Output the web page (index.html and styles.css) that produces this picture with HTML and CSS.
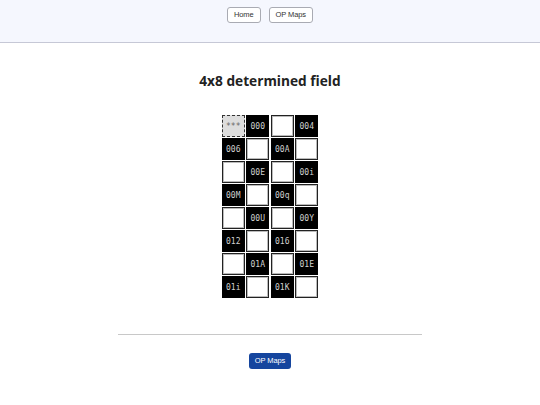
FILE: index.html
```html
<!DOCTYPE html>
<html>
<head>
<meta charset="utf-8">
<link rel="stylesheet" href="styles.css">
</head>
<body>
<header class="top">
  <nav class="nav">
    <a class="nav-btn">Home</a>
    <a class="nav-btn">OP Maps</a>
  </nav>
</header>
<main class="main">
  <h1 class="title">4x8 determined field</h1>
  <div class="field">
    <div class="cell sel">***</div><div class="cell on">000</div><div class="cell off"></div><div class="cell on">004</div>
    <div class="cell on">006</div><div class="cell off"></div><div class="cell on">00A</div><div class="cell off"></div>
    <div class="cell off"></div><div class="cell on">00E</div><div class="cell off"></div><div class="cell on">00i</div>
    <div class="cell on">00M</div><div class="cell off"></div><div class="cell on">00q</div><div class="cell off"></div>
    <div class="cell off"></div><div class="cell on">00U</div><div class="cell off"></div><div class="cell on">00Y</div>
    <div class="cell on">012</div><div class="cell off"></div><div class="cell on">016</div><div class="cell off"></div>
    <div class="cell off"></div><div class="cell on">01A</div><div class="cell off"></div><div class="cell on">01E</div>
    <div class="cell on">01i</div><div class="cell off"></div><div class="cell on">01K</div><div class="cell off"></div>
  </div>
  <hr class="rule">
  <a class="primary">OP Maps</a>
</main>
</body>
</html>
```
FILE: styles.css
```css
html, body { margin: 0; padding: 0; background: #fff; }
body { font-family: "Liberation Sans", Arial, sans-serif; color: #222; }
.top {
  height: 42px;
  background: #f5f7fe;
  border-bottom: 1px solid #c6c8d6;
  box-sizing: content-box;
}
.nav {
  display: flex;
  justify-content: center;
  gap: 8px;
  padding-top: 7px;
}
.nav-btn {
  display: block;
  height: 16px;
  line-height: 14px;
  box-sizing: border-box;
  padding: 0 6px;
  font-size: 7.5px;
  letter-spacing: -0.1px;
  color: #333;
  background: #fff;
  border: 1px solid #a9abb3;
  border-radius: 3px;
}
.main {
  display: flex;
  flex-direction: column;
  align-items: center;
}
.title {
  margin: 28px 0 0;
  font-family: "Open Sans", sans-serif;
  font-weight: 700;
  font-size: 13.7px;
  line-height: 20px;
  color: #222;
}
.field {
  margin-top: 24px;
  display: grid;
  grid-template-columns: repeat(4, 23px);
  grid-auto-rows: 22px;
  column-gap: 1.5px;
  row-gap: 1px;
}
.cell {
  box-sizing: border-box;
  display: flex;
  align-items: center;
  justify-content: center;
  font-family: "DejaVu Sans Mono", monospace;
  font-size: 8px;
}
.on { background: #000; color: #d0d0d0; }
.off { background: #fff; border: 1px solid #222; box-shadow: inset 0 0 0 1px #bbb; }
.sel { background: #ddd; color: #666; border: 1px dashed #333; }
.rule {
  width: 304px;
  margin: 36px 0 0;
  border: 0;
  border-top: 1px solid #c8c8c8;
}
.primary {
  margin-top: 18px;
  display: block;
  height: 16px;
  line-height: 16px;
  padding: 0 6px;
  font-size: 7.5px;
  letter-spacing: -0.1px;
  color: #fff;
  background: #15459e;
  border-radius: 3px;
}
```
